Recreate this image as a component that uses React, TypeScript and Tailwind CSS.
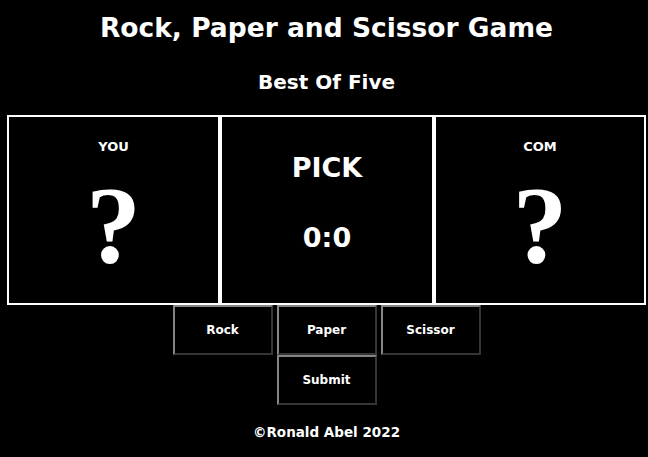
import React from "react"

const btn =
  "w-[100px] h-[50px] bg-black text-white text-[12px] font-bold border-2 border-t-[#858585] border-l-[#858585] border-b-[#363636] border-r-[#363636]"

export default function App() {
  return (
    <div className="w-[648px] h-[457px] bg-black text-white overflow-hidden font-['DejaVu_Sans','Liberation_Sans',sans-serif]">
      <div className="ml-[7px] w-[639px] flex flex-col items-center">
        {/* heading */}
        <div className="h-[56px] flex items-center justify-center">
          <h1 className="text-[26.5px] font-bold leading-none">Rock, Paper and Scissor Game</h1>
        </div>
        <div className="h-[52px] flex items-center justify-center">
          <h2 className="text-[20px] font-bold leading-none">Best Of Five</h2>
        </div>

        {/* board */}
        <div className="mt-[7px] w-full grid grid-cols-[213px_214px_212px]">
          <div className="h-[190px] border-2 border-white flex flex-col items-center">
            <p className="mt-[20px] text-[13px] font-bold leading-[20px]">YOU</p>
            <span className="mt-[13px] text-[110px] font-bold leading-none font-['Liberation_Serif',serif]">?</span>
          </div>
          <div className="h-[190px] border-2 border-white flex flex-col items-center">
            <p className="mt-[34px] text-[27px] font-bold leading-[34px]">PICK</p>
            <p className="mt-[36px] text-[27px] font-bold leading-[34px]">0:0</p>
          </div>
          <div className="h-[190px] border-2 border-white flex flex-col items-center">
            <p className="mt-[20px] text-[13px] font-bold leading-[20px]">COM</p>
            <span className="mt-[13px] text-[110px] font-bold leading-none font-['Liberation_Serif',serif]">?</span>
          </div>
        </div>

        {/* controls */}
        <div className="flex justify-center gap-[4px]">
          <button className={btn}>Rock</button>
          <button className={btn}>Paper</button>
          <button className={btn}>Scissor</button>
        </div>
        <div className="flex justify-center">
          <button className={btn}>Submit</button>
        </div>

        <p className="mt-[17px] text-[13.5px] font-bold leading-[20px]">©Ronald Abel 2022</p>
      </div>
    </div>
  )
}
